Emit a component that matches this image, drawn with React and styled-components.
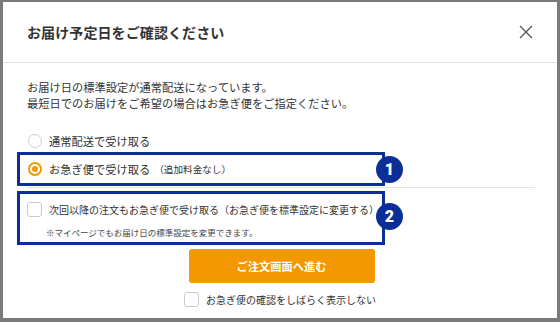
import React from "react";
import styled, { createGlobalStyle } from "styled-components";

const Global = createGlobalStyle`
  html, body { margin: 0; padding: 0; background: #7b7b7b; }
  body { font-family: "Noto Sans CJK JP", "Noto Sans", sans-serif; color: #333; }
  * { box-sizing: border-box; }
`;

const NAVY = "#0b2f96";
const ORANGE = "#f39800";

const Backdrop = styled.div`
  width: 560px;
  height: 322px;
  padding: 2px 3px 4px 3px;
  background: #7b7b7b;
`;

const Modal = styled.div`
  width: 554px;
  height: 316px;
  background: #fff;
  display: flex;
  flex-direction: column;
`;

const Header = styled.div`
  height: 61px;
  display: flex;
  align-items: center;
  justify-content: space-between;
  padding: 0 24px 0 24px;
  border-bottom: 1px solid #e3e3e3;
  flex-shrink: 0;
`;

const Title = styled.h1`
  margin: 0;
  font-size: 14px;
  font-weight: 700;
  color: #333;
  letter-spacing: 0.1px;
`;

const Close = styled.button`
  border: 0;
  background: none;
  padding: 0;
  width: 14px;
  height: 14px;
  display: flex;
  color: #555;
`;

const Body = styled.div`
  padding: 16px 22px 0 24px;
  display: flex;
  flex-direction: column;
`;

const Lead = styled.p`
  margin: 0 0 19px 0;
  font-size: 11.25px;
  line-height: 16px;
  color: #333;
`;

const Row = styled.label`
  display: flex;
  align-items: center;
  gap: 7px;
  height: ${(p) => p.$h || 22}px;
  padding-left: ${(p) => p.$indent || 0}px;
  font-size: ${(p) => p.$size || 11.25}px;
  color: #333;
`;

const RadioMark = styled.span`
  width: 14px;
  height: 14px;
  border-radius: 50%;
  flex-shrink: 0;
  border: ${(p) => (p.$on ? `2px solid ${ORANGE}` : "1px solid #cfcfcf")};
  display: flex;
  align-items: center;
  justify-content: center;
  &::after {
    content: "";
    width: 6px;
    height: 6px;
    border-radius: 50%;
    background: ${(p) => (p.$on ? ORANGE : "transparent")};
  }
`;

const CheckMark = styled.span`
  width: 15px;
  height: 15px;
  border-radius: 3px;
  border: 1px solid #cbcbcb;
  background: #fff;
  flex-shrink: 0;
`;

const Small = styled.span`
  font-size: 9.6px;
  margin-left: -3px;
`;

const Annot = styled.div`
  position: relative;
  width: 368px;
  margin-left: -10px;
  border: 3px solid ${NAVY};
  padding: ${(p) => p.$pad || "0 0 0 8px"};
`;

const Badge = styled.span`
  position: absolute;
  right: -21px;
  top: 50%;
  margin-top: ${(p) => p.$dy || -13}px;
  width: 27px;
  height: 27px;
  border-radius: 50%;
  background: ${NAVY};
  color: #fff;
  font-family: "Roboto", "Lato", sans-serif;
  font-weight: 900;
  font-size: 16px;
  display: flex;
  align-items: center;
  justify-content: center;
`;

const Divider = styled.hr`
  margin: 1px 0 3px 0;
  border: 0;
  border-top: 1px solid #e3e3e3;
`;

const Note = styled.p`
  margin: 0 0 0 19px;
  font-size: 8.5px;
  line-height: 14px;
  color: #444;
`;

const Footer = styled.div`
  display: flex;
  flex-direction: column;
  align-items: center;
  padding-top: 4px;
`;

const Primary = styled.button`
  width: 186px;
  height: 34px;
  border: 0;
  border-radius: 3px;
  background: ${ORANGE};
  color: #fff;
  font-family: "Noto Sans CJK JP", sans-serif;
  font-size: 11.25px;
  font-weight: 700;
  margin-left: 3px;
`;

export default function App() {
  return (
    <>
      <Global />
      <Backdrop>
        <Modal>
          <Header>
            <Title>お届け予定日をご確認ください</Title>
            <Close aria-label="閉じる">
              <svg width="14" height="14" viewBox="0 0 14 14">
                <path d="M1 1 L13 13 M13 1 L1 13" stroke="currentColor" strokeWidth="1.3" fill="none" />
              </svg>
            </Close>
          </Header>
          <Body>
            <Lead>
              お届け日の標準設定が通常配送になっています。
              <br />
              最短日でのお届けをご希望の場合はお急ぎ便をご指定ください。
            </Lead>
            <Row $indent={1}>
              <RadioMark />
              通常配送で受け取る
            </Row>
            <Annot>
              <Row $h={28}>
                <RadioMark $on />
                お急ぎ便で受け取る<Small>（追加料金なし）</Small>
              </Row>
              <Badge>1</Badge>
            </Annot>
            <Divider />
            <Annot $pad="0 0 3px 7px">
              <Row $h={31} $size={10}>
                <CheckMark />
                次回以降の注文もお急ぎ便で受け取る（お急ぎ便を標準設定に変更する）
              </Row>
              <Note>※マイページでもお届け日の標準設定を変更できます。</Note>
              <Badge $dy={-15}>2</Badge>
            </Annot>
          </Body>
          <Footer>
            <Primary>ご注文画面へ進む</Primary>
            <Row $h={32} $size={10}>
              <CheckMark />
              お急ぎ便の確認をしばらく表示しない
            </Row>
          </Footer>
        </Modal>
      </Backdrop>
    </>
  );
}
